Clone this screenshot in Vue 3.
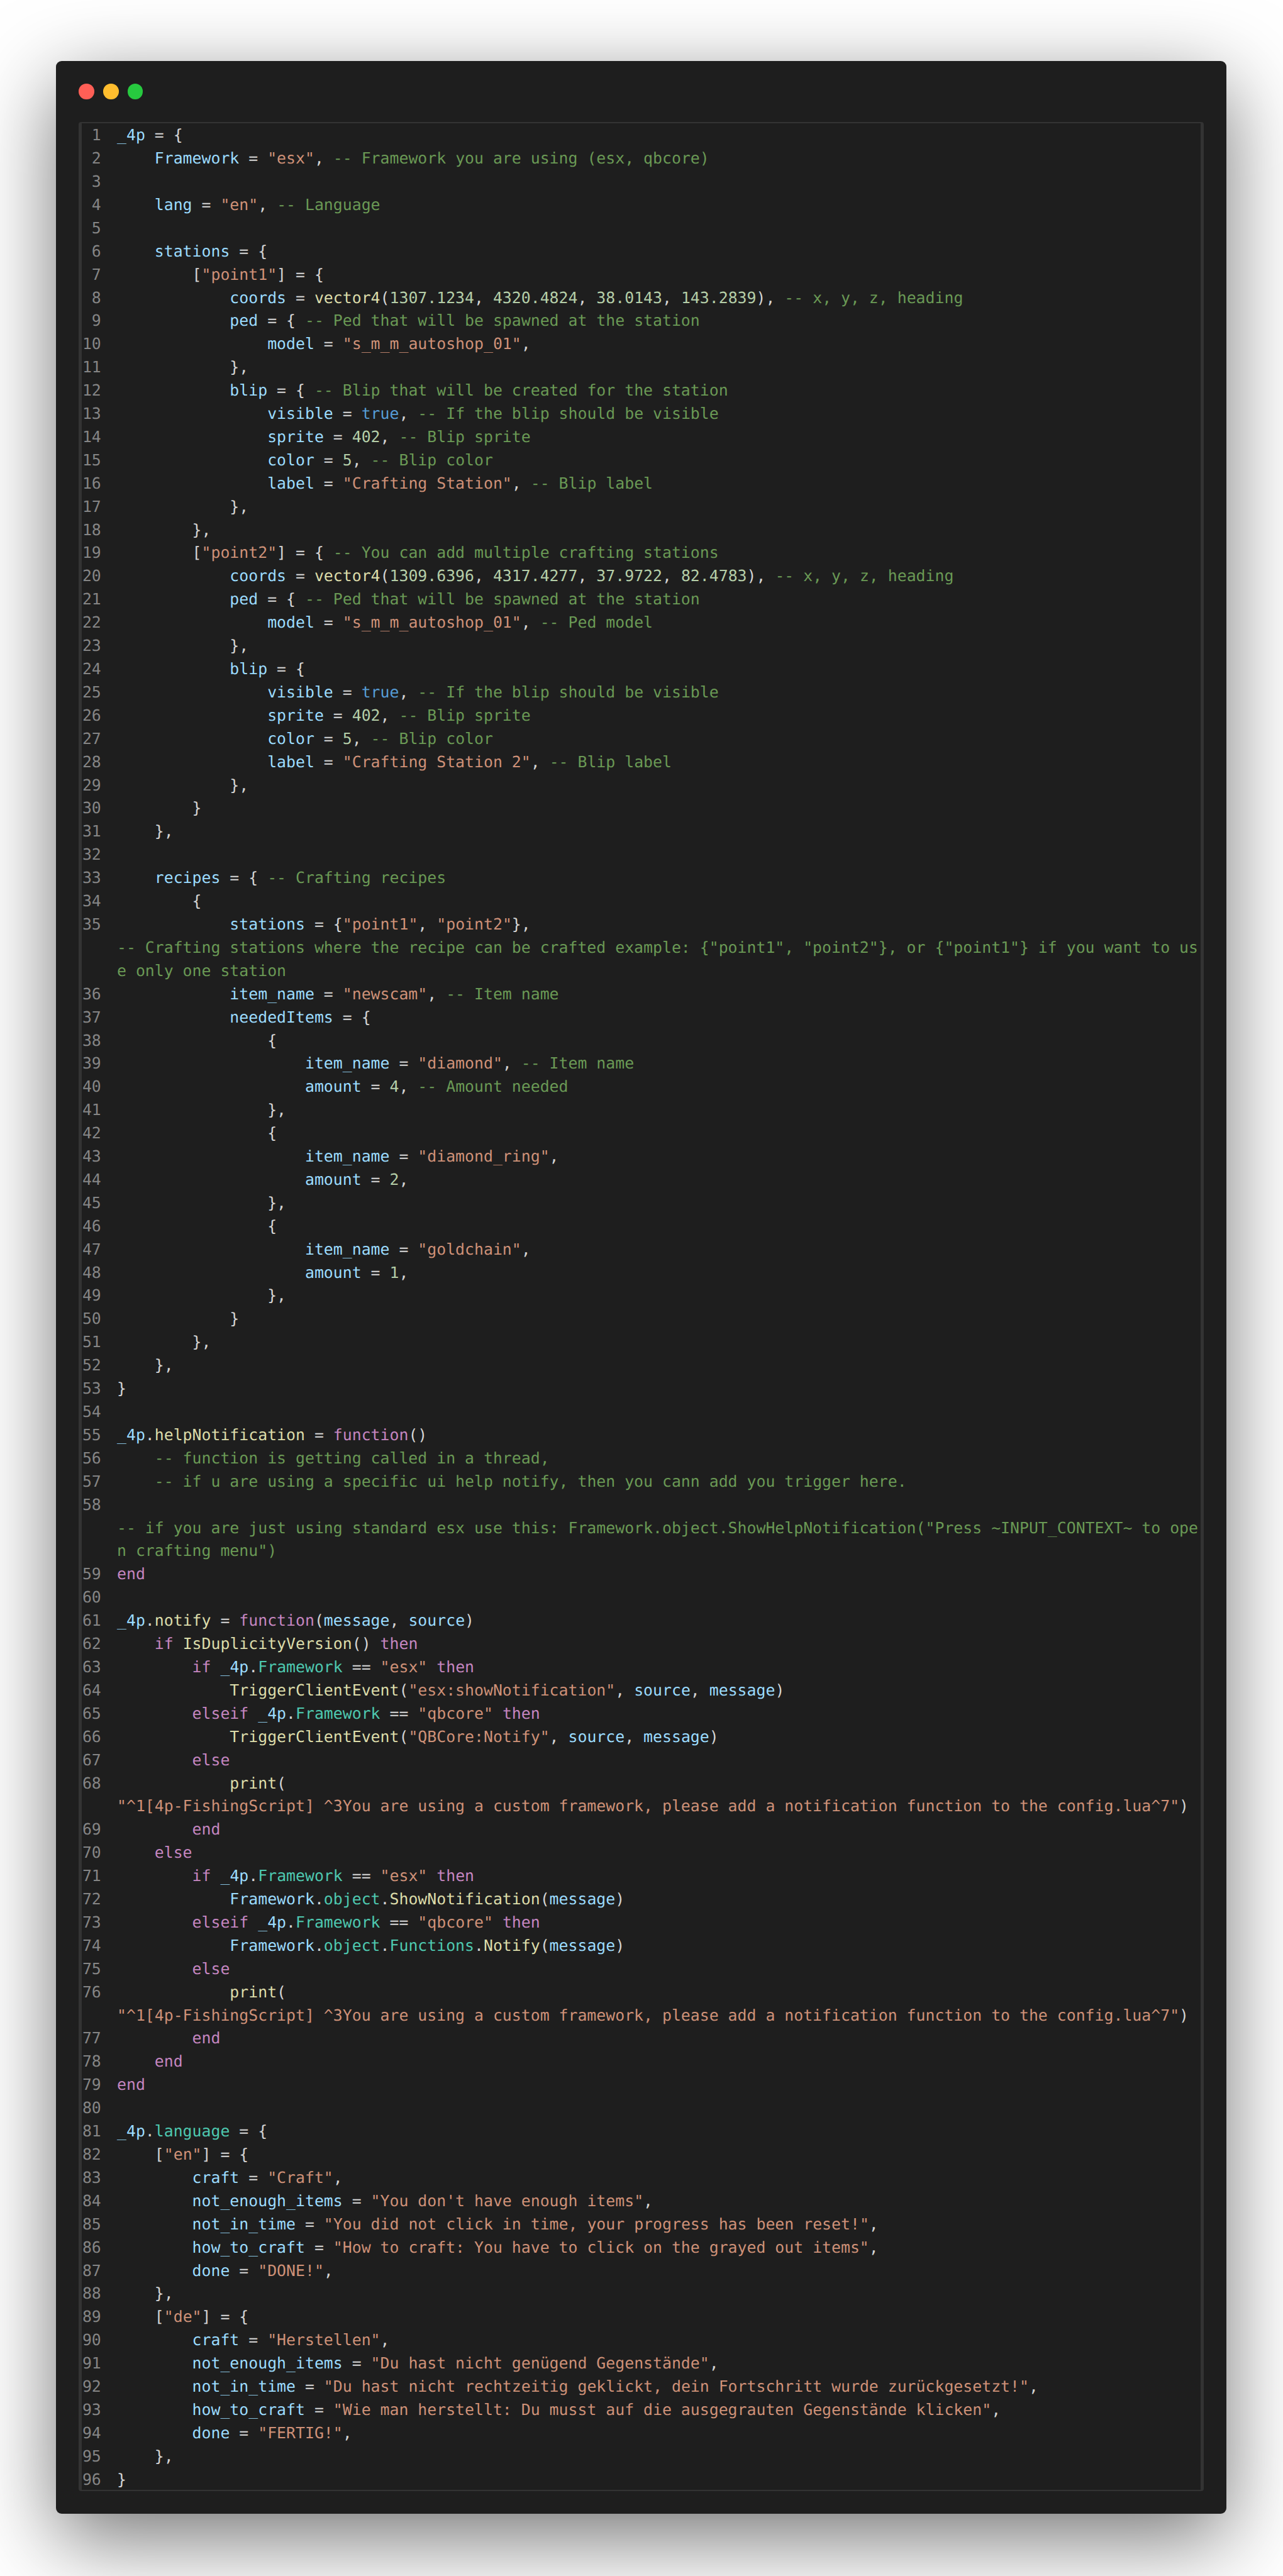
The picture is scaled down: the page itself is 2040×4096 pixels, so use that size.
<script setup>
const source = [
'«v:_4p» = {',
'    «v:Framework» = «s:"esx"», «c:-- Framework you are using (esx, qbcore)»',
'',
'    «v:lang» = «s:"en"», «c:-- Language»',
'',
'    «v:stations» = {',
'        [«s:"point1"»] = {',
'            «v:coords» = «f:vector4»(«n:1307.1234», «n:4320.4824», «n:38.0143», «n:143.2839»), «c:-- x, y, z, heading»',
'            «v:ped» = { «c:-- Ped that will be spawned at the station»',
'                «v:model» = «s:"s_m_m_autoshop_01"»,',
'            },',
'            «v:blip» = { «c:-- Blip that will be created for the station»',
'                «v:visible» = «b:true», «c:-- If the blip should be visible»',
'                «v:sprite» = «n:402», «c:-- Blip sprite»',
'                «v:color» = «n:5», «c:-- Blip color»',
'                «v:label» = «s:"Crafting Station"», «c:-- Blip label»',
'            },',
'        },',
'        [«s:"point2"»] = { «c:-- You can add multiple crafting stations»',
'            «v:coords» = «f:vector4»(«n:1309.6396», «n:4317.4277», «n:37.9722», «n:82.4783»), «c:-- x, y, z, heading»',
'            «v:ped» = { «c:-- Ped that will be spawned at the station»',
'                «v:model» = «s:"s_m_m_autoshop_01"», «c:-- Ped model»',
'            },',
'            «v:blip» = {',
'                «v:visible» = «b:true», «c:-- If the blip should be visible»',
'                «v:sprite» = «n:402», «c:-- Blip sprite»',
'                «v:color» = «n:5», «c:-- Blip color»',
'                «v:label» = «s:"Crafting Station 2"», «c:-- Blip label»',
'            },',
'        }',
'    },',
'',
'    «v:recipes» = { «c:-- Crafting recipes»',
'        {',
'            «v:stations» = {«s:"point1"», «s:"point2"»},\n«c:-- Crafting stations where the recipe can be crafted example: {"point1", "point2"}, or {"point1"} if you want to us»\n«c:e only one station»',
'            «v:item_name» = «s:"newscam"», «c:-- Item name»',
'            «v:neededItems» = {',
'                {',
'                    «v:item_name» = «s:"diamond"», «c:-- Item name»',
'                    «v:amount» = «n:4», «c:-- Amount needed»',
'                },',
'                {',
'                    «v:item_name» = «s:"diamond_ring"»,',
'                    «v:amount» = «n:2»,',
'                },',
'                {',
'                    «v:item_name» = «s:"goldchain"»,',
'                    «v:amount» = «n:1»,',
'                },',
'            }',
'        },',
'    },',
'}',
'',
'«v:_4p».«f:helpNotification» = «k:function»()',
'    «c:-- function is getting called in a thread,»',
'    «c:-- if u are using a specific ui help notify, then you cann add you trigger here.»',
'\n«c:-- if you are just using standard esx use this: Framework.object.ShowHelpNotification("Press ~INPUT_CONTEXT~ to ope»\n«c:n crafting menu")»',
'«k:end»',
'',
'«v:_4p».«f:notify» = «k:function»(«v:message», «v:source»)',
'    «k:if» «f:IsDuplicityVersion»() «k:then»',
'        «k:if» «v:_4p».«p:Framework» == «s:"esx"» «k:then»',
'            «f:TriggerClientEvent»(«s:"esx:showNotification"», «v:source», «v:message»)',
'        «k:elseif» «v:_4p».«p:Framework» == «s:"qbcore"» «k:then»',
'            «f:TriggerClientEvent»(«s:"QBCore:Notify"», «v:source», «v:message»)',
'        «k:else»',
'            «f:print»(\n«s:"^1[4p-FishingScript] ^3You are using a custom framework, please add a notification function to the config.lua^7"»)',
'        «k:end»',
'    «k:else»',
'        «k:if» «v:_4p».«p:Framework» == «s:"esx"» «k:then»',
'            «v:Framework».«p:object».«f:ShowNotification»(«v:message»)',
'        «k:elseif» «v:_4p».«p:Framework» == «s:"qbcore"» «k:then»',
'            «v:Framework».«p:object».«p:Functions».«f:Notify»(«v:message»)',
'        «k:else»',
'            «f:print»(\n«s:"^1[4p-FishingScript] ^3You are using a custom framework, please add a notification function to the config.lua^7"»)',
'        «k:end»',
'    «k:end»',
'«k:end»',
'',
'«v:_4p».«p:language» = {',
'    [«s:"en"»] = {',
'        «v:craft» = «s:"Craft"»,',
'        «v:not_enough_items» = «s:"You don\'t have enough items"»,',
'        «v:not_in_time» = «s:"You did not click in time, your progress has been reset!"»,',
'        «v:how_to_craft» = «s:"How to craft: You have to click on the grayed out items"»,',
'        «v:done» = «s:"DONE!"»,',
'    },',
'    [«s:"de"»] = {',
'        «v:craft» = «s:"Herstellen"»,',
'        «v:not_enough_items» = «s:"Du hast nicht genügend Gegenstände"»,',
'        «v:not_in_time» = «s:"Du hast nicht rechtzeitig geklickt, dein Fortschritt wurde zurückgesetzt!"»,',
'        «v:how_to_craft» = «s:"Wie man herstellt: Du musst auf die ausgegrauten Gegenstände klicken"»,',
'        «v:done» = «s:"FERTIG!"»,',
'    },',
'}',
]

const parse = (line) => {
  const tokens = []
  const re = /«(\w):([^»]*)»/g
  let last = 0
  let m
  while ((m = re.exec(line))) {
    if (m.index > last) tokens.push({ t: 'd', text: line.slice(last, m.index) })
    tokens.push({ t: m[1], text: m[2] })
    last = m.index + m[0].length
  }
  if (last < line.length) tokens.push({ t: 'd', text: line.slice(last) })
  return tokens
}

const lines = source.map((src, i) => ({ n: i + 1, tokens: parse(src) }))
const dots = ['red', 'amber', 'green']
</script>

<template>
  <div class="page">
    <div class="window">
      <div class="titlebar">
        <span v-for="d in dots" :key="d" class="dot" :class="d"></span>
      </div>
      <div class="editor">
        <div v-for="line in lines" :key="line.n" class="line">
          <span class="num">{{ line.n }}</span>
          <code class="code"><span v-for="(tok, i) in line.tokens" :key="i" :class="'t-' + tok.t">{{ tok.text }}</span></code>
        </div>
      </div>
    </div>
  </div>
</template>

<style>
html, body { margin: 0; background: #fff; }
</style>

<style scoped>
.page {
  box-sizing: border-box;
  width: 2040px;
  height: 4096px;
  padding: 97.1px 90.2px 99.4px 89.3px;
  background: #fff;
  overflow: hidden;
}
.window {
  box-sizing: border-box;
  height: 100%;
  padding: 0 35.5px 35.9px 36px;
  background: #1e1e1e;
  border-radius: 9px;
  box-shadow: 0 38.8px 132px rgba(0, 0, 0, 0.55);
  display: flex;
  flex-direction: column;
}
.titlebar {
  display: flex;
  gap: 14.5px;
  padding: 36.2px 0 36px;
  flex: none;
}
.dot { width: 24.4px; height: 24.4px; border-radius: 50%; }
.red { background: #ff5f56; }
.amber { background: #ffbd2e; }
.green { background: #27c93f; }
.editor {
  flex: 1;
  min-height: 0;
  box-sizing: border-box;
  border: solid #333;
  border-width: 2px 5px 2px 5px;
  border-radius: 4px;
  padding-top: 1.5px;
  font-family: "DejaVu Sans Mono", "Liberation Mono", monospace;
  font-size: 24.84px;
  line-height: 36.9px;
  color: #d4d4d4;
  text-rendering: geometricPrecision;
}
.line { display: flex; }
.num {
  flex: none;
  width: 30.5px;
  text-align: right;
  color: #858585;
}
.code {
  margin-left: 25.2px;
  font: inherit;
  white-space: pre;
}
.t-d { color: #d4d4d4; }
.t-v { color: #9cdcfe; }
.t-s { color: #ce9178; }
.t-c { color: #6a9955; }
.t-k { color: #c586c0; }
.t-f { color: #dcdcaa; }
.t-n { color: #b5cea8; }
.t-p { color: #4ec9b0; }
.t-b { color: #569cd6; }
</style>
